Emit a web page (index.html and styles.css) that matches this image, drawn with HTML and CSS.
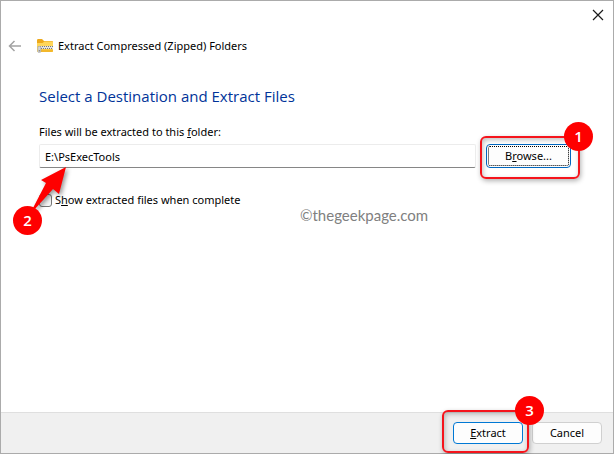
FILE: index.html
```html
<!DOCTYPE html>
<html lang="en">
<head>
    <meta charset="UTF-8">
    <title>Extract Compressed (Zipped) Folders</title>
    <link rel="stylesheet" href="styles.css">
</head>
<body>
<div class="window">
    <div class="titlebar">
        <button type="button" class="icon-btn" aria-label="Close">
            <svg width="12" height="12" viewBox="0 0 12 12"><path d="M1 1L11 11M11 1L1 11" stroke="#1a1a1a" stroke-width="1.2" fill="none"/></svg>
        </button>
    </div>

    <header class="header">
        <button type="button" class="icon-btn" aria-label="Back">
            <svg width="14" height="12" viewBox="0 0 14 12"><path d="M6.5 1L1.5 6L6.5 11M1.5 6H13" stroke="#a3a3a3" stroke-width="1.5" fill="none"/></svg>
        </button>
        <svg class="zip-icon" width="16" height="14" viewBox="0 0 16 14">
            <path d="M0 1.2Q0 0 1.2 0H5L7 2H15Q16 2 16 3V7H0Z" fill="#eda91c"/>
            <path d="M0 4H5.5L7.5 2.5H15Q16 2.5 16 3.5V12Q16 13 15 13H1Q0 13 0 12Z" fill="#ffd65a"/>
            <path d="M3 10.5H16V12Q16 13 15 13H3Z" fill="#f3b82b"/>
            <path d="M2 7H16V10H2Z" fill="#e3e3e3"/>
            <path d="M3 7.5H16M4 9.5H16" stroke="#777" stroke-width="1" stroke-dasharray="1 1"/>
            <path d="M0.8 7.5H3.8V12.6Q3.8 13.6 2.3 13.6T0.8 12.6Z" fill="#d5d5d5" stroke="#999" stroke-width="0.5"/>
            <rect x="1.8" y="11.2" width="1" height="1.2" fill="#666"/>
        </svg>
        <span>Extract Compressed (Zipped) Folders</span>
    </header>

    <main class="content">
        <h1>Select a Destination and Extract Files</h1>
        <label class="path-label" for="path">Files will be extracted to this <u>f</u>older:</label>
        <div class="path-row">
            <input type="text" id="path" class="path" value="E:\PsExecTools" spellcheck="false">
            <div class="marked marked-browse">
                <button type="button" class="btn browse">B<u>r</u>owse...</button>
                <span class="frame"></span>
                <span class="badge">1</span>
            </div>
        </div>
        <div class="check-row">
            <input type="checkbox" id="show">
            <label for="show">S<u>h</u>ow extracted files when complete</label>
            <svg class="arrow" width="40" height="50" viewBox="0 0 40 50"><path d="M35 4L28 31L22 26L4 46L2 45L15 20L10 17Z" fill="#fe0000"/></svg>
            <span class="badge">2</span>
        </div>
        <span class="watermark">©thegeekpage.com</span>
    </main>

    <footer class="footer">
        <div class="marked">
            <button type="button" class="btn primary"><u>E</u>xtract</button>
            <span class="frame frame-extract"></span>
            <span class="badge">3</span>
        </div>
        <button type="button" class="btn">Cancel</button>
    </footer>
</div>
</body>
</html>
```

FILE: styles.css
```css
* {
    box-sizing: border-box;
}

body {
    margin: 0;
    background-color: white;
    font-family: "Noto Sans", sans-serif;
    font-size: 11px;
    line-height: 16px;
    color: #000;
}

.window {
    display: flex;
    flex-direction: column;
    min-height: 100vh;
    border: 1px solid #ababab;
}

.titlebar {
    display: flex;
    justify-content: flex-end;
    padding: 8px 9px 0 0;
}

.icon-btn {
    display: flex;
    padding: 0;
    border: none;
    background: none;
}

.header {
    display: flex;
    align-items: center;
    padding: 17px 7px 0;
}

.zip-icon {
    margin: 0 5px 0 15px;
}

.content {
    position: relative;
    flex: 1;
    padding: 32px 42px 0 38px;
}

h1 {
    margin: 0;
    font-family: "Open Sans", sans-serif;
    font-size: 15px;
    font-weight: normal;
    line-height: 20px;
    color: #003399;
}

.path-label {
    display: block;
    margin-top: 18px;
}

.path-row {
    display: flex;
    align-items: center;
    gap: 10px;
    margin-top: 4px;
}

.path {
    flex: 1;
    min-width: 0;
    height: 24px;
    padding: 0 5px;
    border: 1px solid #ececec;
    border-bottom-color: #868686;
    border-radius: 2px;
    background-color: white;
    font: inherit;
    color: inherit;
    outline: none;
}

.btn {
    display: block;
    width: 70px;
    height: 22px;
    padding: 0;
    border: 1px solid #d0d0d0;
    border-radius: 4px;
    background-color: #fdfdfd;
    font: inherit;
    color: inherit;
}

.primary {
    border-color: #0078d4;
}

.browse {
    width: 85px;
    height: 24px;
    border-color: #0067c0;
    outline: 1px dotted #000;
    outline-offset: -3px;
}

.marked {
    position: relative;
}

/* red highlight round a button */
.frame {
    position: absolute;
    inset: -8px -9px -11px -6px;
    border: 2px solid #f5141c;
    border-radius: 6px;
    box-shadow: 1px 2px 5px rgba(0, 0, 0, 0.3), inset 1px 2px 5px rgba(0, 0, 0, 0.25);
    pointer-events: none;
}

.frame-extract {
    inset: -12px -6px -9px -11px;
}

.badge {
    position: absolute;
    top: -22px;
    right: -22px;
    width: 29px;
    height: 29px;
    border-radius: 50%;
    background-color: #fe0000;
    font-family: "Open Sans", sans-serif;
    font-size: 15px;
    font-weight: 600;
    line-height: 29px;
    text-align: center;
    color: white;
}

.check-row {
    position: relative;
    display: flex;
    align-items: center;
    gap: 3px;
    margin-top: 24px;
}

.check-row input {
    appearance: none;
    width: 13px;
    height: 13px;
    margin: 0;
    border: 1px solid #777;
    border-radius: 3px;
    background-color: #f5f5f5;
}

.check-row .badge {
    top: 14px;
    left: -26px;
}

.arrow {
    position: absolute;
    top: -29px;
    left: -8px;
    filter: drop-shadow(2px 2px 2px rgba(0, 0, 0, 0.4));
}

.watermark {
    position: absolute;
    top: 151px;
    left: 50%;
    margin-left: -7px;
    font-family: Lato, sans-serif;
    font-size: 15px;
    line-height: 20px;
    color: #808080;
}

.footer {
    display: flex;
    justify-content: flex-end;
    gap: 9px;
    padding: 9px 11px;
    border-top: 1px solid #dfdfdf;
    background-color: #f0f0f0;
}

.footer .badge {
    top: -26px;
    right: -21px;
}
```
